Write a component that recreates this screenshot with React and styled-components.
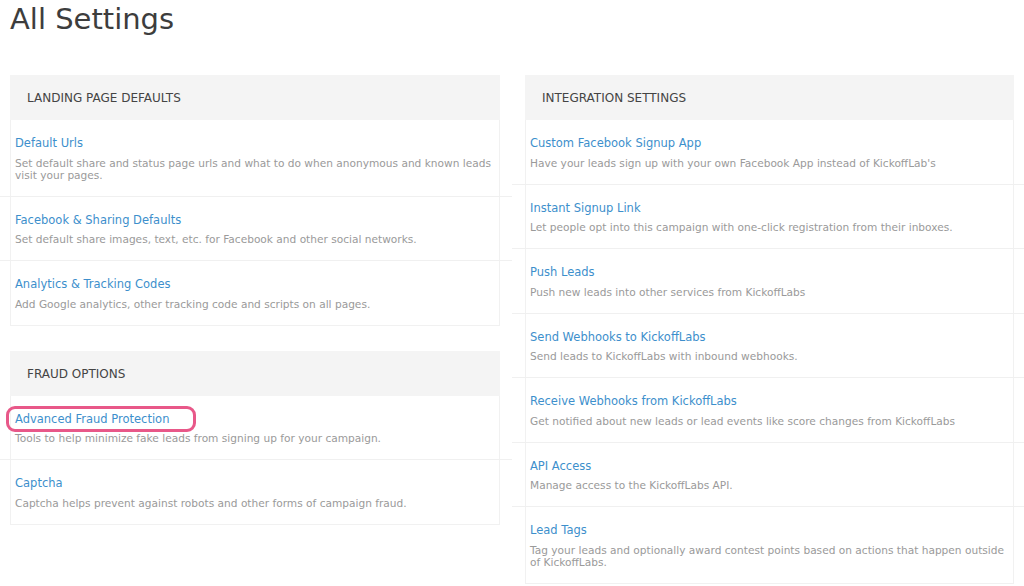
import React from "react";
import styled, { createGlobalStyle } from "styled-components";

const GlobalStyle = createGlobalStyle`
  html, body { margin: 0; padding: 0; background: #fff; }
  body { font-family: "DejaVu Sans", Verdana, sans-serif; }
`;

const Page = styled.div`
  padding: 0 10px;
  width: 1024px;
  box-sizing: border-box;
  overflow: hidden;
  height: 586px;
`;

const Title = styled.h1`
  margin: 2px 0 38px;
  font-size: 29px;
  line-height: 35px;
  font-weight: normal;
  color: #3d3d3d;
`;

const Columns = styled.div`
  display: grid;
  grid-template-columns: 490px 489px;
  column-gap: 25px;
  align-items: start;
`;

const Column = styled.div`
  display: flex;
  flex-direction: column;
  gap: 25px;
`;

const Panel = styled.section`
  border: 1px solid #f1f1f1;
  border-top: none;
  background: #fff;
`;

const PanelHeader = styled.h2`
  margin: 0 -1px;
  height: 45px;
  display: flex;
  align-items: center;
  padding: 1px 0 0 17px;
  box-sizing: border-box;
  background: #f4f4f4;
  font-size: 12px;
  font-weight: normal;
  color: #444;
  text-transform: uppercase;
`;

const Row = styled.div`
  position: relative;
  padding: 15px 4px 15px;
  & + & { border-top: 1px solid #f0f0f0; }
  & + &::before {
    content: "";
    position: absolute;
    top: -1px;
    left: ${(p) => (p.$side === "left" ? "-11px" : "-14px")};
    right: ${(p) => (p.$side === "left" ? "-13px" : "-11px")};
    border-top: 1px solid #f0f0f0;
  }
`;

const LinkWrap = styled.div`
  position: relative;
  width: fit-content;
  ${(p) =>
    p.$marked &&
    `
    &::after {
      content: "";
      position: absolute;
      left: -9px;
      right: -27px;
      top: -5px;
      bottom: -5px;
      border: 3px solid #e6467c;
      border-radius: 9px;
      opacity: 0.9;
    }
  `}
`;

const SettingLink = styled.a`
  display: block;
  font-size: 11.5px;
  line-height: 16px;
  color: #3d8fcc;
  text-decoration: none;
`;

const Desc = styled.p`
  margin: 5.5px 0 0;
  font-size: 10.6px;
  line-height: 12px;
  color: #9a9a9a;
`;

const Setting = ({ title, desc, side, marked }) => (
  <Row $side={side}>
    <LinkWrap $marked={marked}>
      <SettingLink href="#">{title}</SettingLink>
    </LinkWrap>
    <Desc>{desc}</Desc>
  </Row>
);

const landing = [
  {
    title: "Default Urls",
    desc: "Set default share and status page urls and what to do when anonymous and known leads visit your pages.",
  },
  {
    title: "Facebook & Sharing Defaults",
    desc: "Set default share images, text, etc. for Facebook and other social networks.",
  },
  {
    title: "Analytics & Tracking Codes",
    desc: "Add Google analytics, other tracking code and scripts on all pages.",
  },
];

const fraud = [
  {
    title: "Advanced Fraud Protection",
    desc: "Tools to help minimize fake leads from signing up for your campaign.",
    marked: true,
  },
  {
    title: "Captcha",
    desc: "Captcha helps prevent against robots and other forms of campaign fraud.",
  },
];

const integration = [
  {
    title: "Custom Facebook Signup App",
    desc: "Have your leads sign up with your own Facebook App instead of KickoffLab's",
  },
  {
    title: "Instant Signup Link",
    desc: "Let people opt into this campaign with one-click registration from their inboxes.",
  },
  { title: "Push Leads", desc: "Push new leads into other services from KickoffLabs" },
  {
    title: "Send Webhooks to KickoffLabs",
    desc: "Send leads to KickoffLabs with inbound webhooks.",
  },
  {
    title: "Receive Webhooks from KickoffLabs",
    desc: "Get notified about new leads or lead events like score changes from KickoffLabs",
  },
  { title: "API Access", desc: "Manage access to the KickoffLabs API." },
  {
    title: "Lead Tags",
    desc: "Tag your leads and optionally award contest points based on actions that happen outside of KickoffLabs.",
  },
];

const SettingsPanel = ({ heading, items, side }) => (
  <Panel>
    <PanelHeader>{heading}</PanelHeader>
    {items.map((it) => (
      <Setting key={it.title} {...it} side={side} />
    ))}
  </Panel>
);

export default function App() {
  return (
    <>
      <GlobalStyle />
      <Page>
        <Title>All Settings</Title>
        <Columns>
          <Column>
            <SettingsPanel heading="Landing Page Defaults" items={landing} side="left" />
            <SettingsPanel heading="Fraud Options" items={fraud} side="left" />
          </Column>
          <Column>
            <SettingsPanel heading="Integration Settings" items={integration} side="right" />
          </Column>
        </Columns>
      </Page>
    </>
  );
}
